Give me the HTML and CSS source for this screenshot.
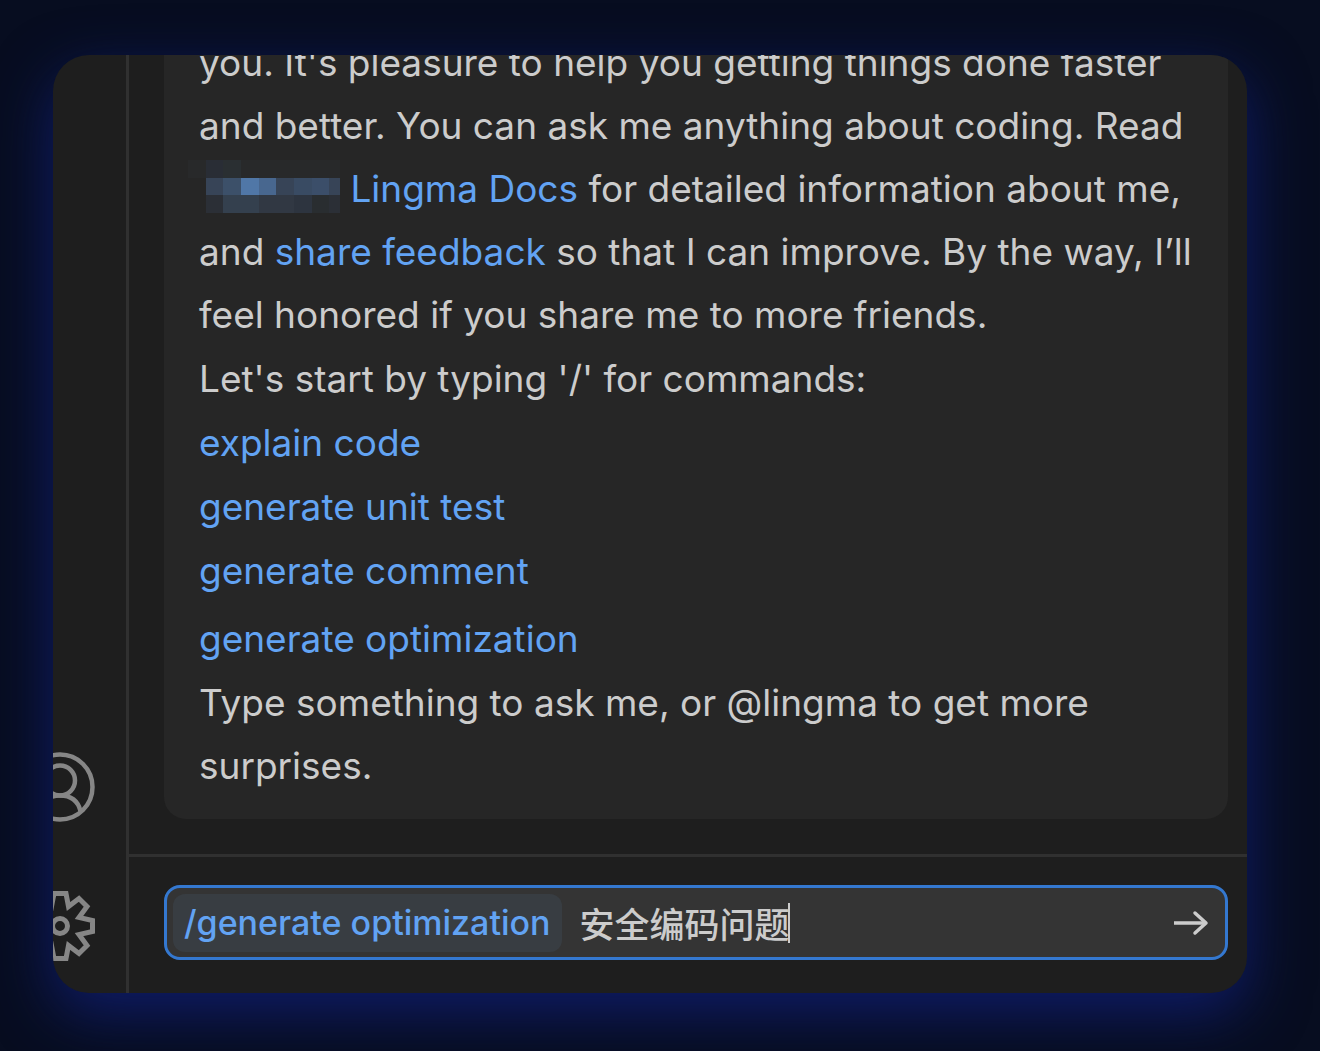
FILE: index.html
```html
<!DOCTYPE html>
<html lang="en">
<head>
    <meta charset="UTF-8">
    <title>Lingma Chat</title>
    <link rel="stylesheet" href="styles.css">
</head>
<body>
<div class="window">
    <nav class="activity-bar" aria-label="Activity bar">
        <button type="button" class="activity-button" aria-label="Account">
            <svg viewBox="0 0 70 70" width="70" height="70" fill="none" stroke="currentColor" stroke-width="4.500">
                <circle cx="35" cy="35" r="32.500"/>
                <circle cx="35" cy="28.500" r="15"/>
                <path d="M14.500 59C17 49 24 43.500 35 43.500S53 49 55.500 59"/>
            </svg>
        </button>
        <button type="button" class="activity-button" aria-label="Settings">
            <svg viewBox="0 0 70 70" width="70" height="70" fill="none" stroke="currentColor" stroke-width="5">
                <path d="M29 2.500H41L43.500 15.500 54 7.500 62 15.500 54 26.500 67.500 29.500V40.500L54 43.500 62 54.500 54 62.500 43.500 54.500 41 67.500H29L26.500 54.500 16 62.500 8 54.500 16 43.500 2.500 40.500V29.500L16 26.500 8 15.500 16 7.500 26.500 15.500z"/>
                <circle cx="35" cy="35" r="7.500"/>
            </svg>
        </button>
    </nav>
    <main class="chat">
        <section class="messages">
            <article class="message">
                <p>
                    you. It's pleasure to help you getting things done faster
                    and better. You can ask me anything about coding. Read
                    <a href="#docs"><svg class="mosaic" viewBox="0 0 152 53" width="152" height="53" shape-rendering="crispEdges" aria-hidden="true">
                        <path fill="#28292a" d="M0 0h152v18H0z"/>
                        <path fill="#292d35" d="M18 0h17v18H18z"/>
                        <path fill="#2a2f32" d="M35 0h18v18H35z"/>
                        <path fill="#374457" d="M18 18h134v17H18z"/>
                        <path fill="#3c5069" d="M35 18h18v17H35z"/>
                        <path fill="#5077a7" d="M53 18h18v17H53z"/>
                        <path fill="#48678f" d="M71 18h17v17H71z"/>
                        <path fill="#394b63" d="M106 18h18v17h-18z"/>
                        <path fill="#3b4e69" d="M124 18h17v17h-17z"/>
                        <path fill="#2b2f36" d="M18 35h134v18H18z"/>
                        <path fill="#34404e" d="M35 35h36v18H35z"/>
                        <path fill="#313843" d="M71 35h35v18H71z"/>
                        <path fill="#2d343f" d="M106 35h18v18h-18z"/>
                        <path fill="#292d30" d="M124 35h17v18h-17z"/>
                    </svg> Lingma Docs</a> for detailed information about me,
                    and <a href="#feedback">share feedback</a> so that I can improve. By the way, I’ll
                    feel honored if you share me to more friends.
                </p>
                <p>Let's start by typing '/' for commands:</p>
                <ul class="commands">
                    <li><a href="#explain">explain code</a></li>
                    <li><a href="#test">generate unit test</a></li>
                    <li><a href="#comment">generate comment</a></li>
                    <li class="last"><a href="#optimization">generate optimization</a></li>
                </ul>
                <p>Type something to ask me, or @lingma to get more surprises.</p>
            </article>
        </section>
        <form class="composer">
            <div class="prompt">
                <label class="command" for="question">/generate optimization</label>
                <input class="question" id="question" type="text" value="安全编码问题">
                <span class="caret"></span>
                <button type="button" class="send" aria-label="Send">
                    <svg viewBox="0 0 36 26" width="36" height="26" fill="none" stroke="currentColor" stroke-width="3.500">
                        <path d="M1 13h32"/>
                        <path d="M22 3l11 10-11 10" stroke-linecap="round" stroke-linejoin="round"/>
                    </svg>
                </button>
            </div>
        </form>
    </main>
</div>
</body>
</html>
```
FILE: styles.css
```css
* {
    box-sizing: border-box;
}

body {
    display: flex;
    height: 100vh;
    margin: 0;
    padding: 55px 73px 58px 53px;
    overflow: hidden;
    font-family: Inter, "Noto Sans CJK SC", sans-serif;
    font-size: 37px;
    line-height: 63px;
    color: #cccccc;
    background-color: #070d20;
}

a {
    color: #62a3f3;
    text-decoration: none;
}

button {
    padding: 0;
    border: 0;
    color: inherit;
    background: none;
}

svg {
    display: block;
}

.window {
    display: flex;
    flex: 1;
    min-width: 0;
    overflow: hidden;
    border-radius: 36px;
    background-color: #1e1e1e;
    box-shadow: 0 20px 60px #0f1c68;
}

/* icons are wider than what the bar shows of them */
.activity-bar {
    display: flex;
    flex: none;
    flex-direction: column;
    justify-content: flex-end;
    gap: 69px;
    width: 76px;
    padding-bottom: 32px;
    overflow: hidden;
    border-right: 3px solid #303030;
    color: #868686;
}

.activity-button {
    width: 70px;
    margin-left: -28px;
}

.chat {
    display: flex;
    flex: 1;
    flex-direction: column;
    min-width: 0;
}

.messages {
    display: flex;
    flex: 1;
    flex-direction: column;
    justify-content: flex-end;
    min-height: 0;
    padding: 0 19px 35px 35px;
    overflow: hidden;
}

.message {
    display: flex;
    flex: none;
    flex-direction: column;
    gap: 1px;
    padding: 32px 28px 22px 35px;
    border-radius: 22px;
    background-color: #262626;
}

.message p {
    margin: 0;
}

.mosaic {
    display: inline-block;
    margin-left: -11px;
    vertical-align: -11px;
}

.commands {
    display: flex;
    flex-direction: column;
    gap: 1px;
    margin: 0;
    padding: 0;
    list-style: none;
}

.commands .last {
    padding-top: 4px;
}

.composer {
    padding: 28px 19px 33px 35px;
    border-top: 3px solid #303030;
}

.prompt {
    display: flex;
    align-items: center;
    height: 75px;
    padding: 0 16px 0 6px;
    border: 3px solid #3478d0;
    border-radius: 16px;
    background-color: #343434;
}

.command {
    flex: none;
    padding: 0 11px;
    border-radius: 12px;
    font-size: 34px;
    font-weight: 500;
    line-height: 58px;
    color: #62a3f3;
    background-color: #383d42;
}

.question {
    width: 226px;
    padding: 0 0 0 18px;
    border: 0;
    outline: 0;
    font-family: "Noto Sans CJK SC", sans-serif;
    font-size: 35px;
    font-weight: 500;
    line-height: 58px;
    color: inherit;
    background: none;
}

.caret {
    width: 2px;
    height: 40px;
    background-color: #cccccc;
}

.send {
    margin-left: auto;
}
```
